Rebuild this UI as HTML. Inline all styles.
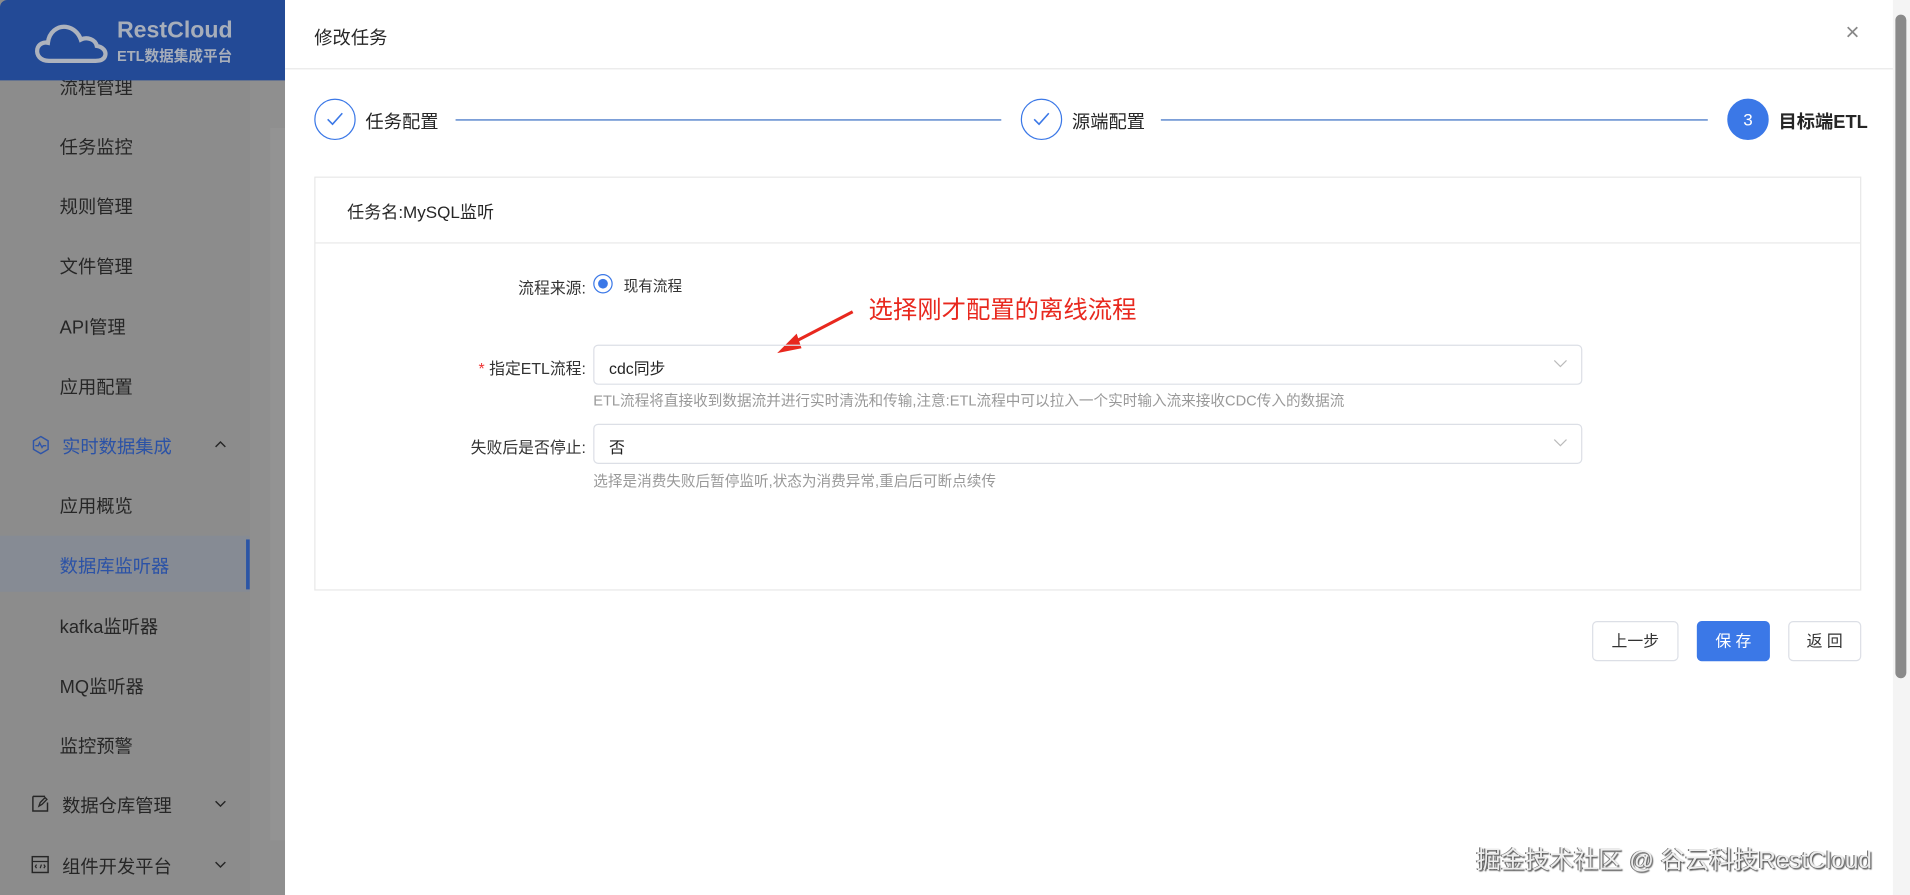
<!DOCTYPE html>
<html><head><meta charset="utf-8"><style>
*{margin:0;padding:0;box-sizing:border-box}
html,body{width:1910px;height:895px;overflow:hidden;background:#fff}
#w{position:absolute;left:0;top:0;width:1568px;height:735px;transform:scale(1.21811,1.2177);transform-origin:0 0;font-family:"Liberation Sans","Noto Sans CJK SC",sans-serif;color:#333}
.abs{position:absolute}
#side{left:0;top:0;width:234px;height:735px;background:#8c8c8c}
#hdr{left:0;top:0;width:234px;height:66px;background:#234a96;border-top-left-radius:6px}
.mi{position:absolute;left:49px;font-size:15px;color:#262626}
.ic{position:absolute;left:25px}
.ar{position:absolute;left:176px}
#dr{left:234px;top:0;width:1320px;height:735px;background:#fff}
.step{position:absolute;top:81px;width:34px;height:34px;border:1px solid #3b78e7;border-radius:50%}
.sl{position:absolute;top:98px;height:1px;background:#3b6fc4}
.st{position:absolute;top:89px;font-size:15px;color:#262626}
.lbl{position:absolute;font-size:13px;color:#333;text-align:right;width:200px}
.sel{position:absolute;left:487px;width:812px;height:33px;border:1px solid #dcdfe6;border-radius:4px;font-size:13px;padding:8px 12px;color:#222}
.hint{position:absolute;left:487px;font-size:12px;color:#999}
.btn{position:absolute;top:510px;height:33px;border:1px solid #dcdfe6;border-radius:4px;font-size:13px;text-align:center;line-height:31px;background:#fff;color:#333}
</style></head><body><div id="w">
<div id="side" class="abs">
 <div class="abs" style="left:205px;top:66px;width:29px;height:669px;background:#8f8f8f"></div>
 <div class="abs" style="left:222px;top:105px;width:12px;height:585px;background:#939393"></div>
 <div class="abs" style="left:0;top:440px;width:205px;height:46px;background:#868b94"></div>
 <div class="abs" style="left:202px;top:443px;width:3px;height:41px;background:#2b55a6"></div>
 <div class="mi" style="top:61px">流程管理</div>
 <div class="mi" style="top:110px">任务监控</div>
 <div class="mi" style="top:159px">规则管理</div>
 <div class="mi" style="top:208px">文件管理</div>
 <div class="mi" style="top:258px">API管理</div>
 <div class="mi" style="top:307px">应用配置</div>
 <svg class="ic" style="top:357px" width="17" height="17" viewBox="0 0 17 17"><path d="M8.5 1.5l6 3.5v7l-6 3.5-6-3.5V5z" fill="none" stroke="#2f55a8" stroke-width="1.2"/><path d="M4 9h2.5l1-2.5 2 4 1-1.5H13" fill="none" stroke="#2f55a8" stroke-width="1.1"/></svg>
 <div class="mi" style="top:356px;color:#2b52a6;left:51px">实时数据集成</div>
 <svg class="ar" style="top:362px" width="10" height="6"><path d="M1 5l4-4 4 4" fill="none" stroke="#262626" stroke-width="1.2"/></svg>
 <div class="mi" style="top:405px;left:49px">应用概览</div>
 <div class="mi" style="top:454px;color:#2b52a6">数据库监听器</div>
 <div class="mi" style="top:504px">kafka监听器</div>
 <div class="mi" style="top:553px">MQ监听器</div>
 <div class="mi" style="top:602px">监控预警</div>
 <svg class="ic" style="top:652px" width="16" height="16" viewBox="0 0 16 16"><path d="M2 2h10M2 2v12h12V7" fill="none" stroke="#262626" stroke-width="1.2"/><path d="M7 10l1-3 4-4 1.5 1.5-4 4z" fill="none" stroke="#262626" stroke-width="1.1"/></svg>
 <div class="mi" style="top:651px;left:51px">数据仓库管理</div>
 <svg class="ar" style="top:657px" width="10" height="6"><path d="M1 1l4 4 4-4" fill="none" stroke="#262626" stroke-width="1.2"/></svg>
 <svg class="ic" style="top:702px" width="16" height="16" viewBox="0 0 16 16"><rect x="1.5" y="1.5" width="13" height="13" fill="none" stroke="#262626" stroke-width="1.2"/><path d="M1.5 5.5h13M5 11L4 9.5 5 8M8 11l1-3M11 8l1 1.5-1 1.5" fill="none" stroke="#262626" stroke-width="1"/></svg>
 <div class="mi" style="top:701px;left:51px">组件开发平台</div>
 <svg class="ar" style="top:707px" width="10" height="6"><path d="M1 1l4 4 4-4" fill="none" stroke="#262626" stroke-width="1.2"/></svg>
</div>
<div id="hdr" class="abs">
 <svg class="abs" style="left:28px;top:17px" width="68" height="38" viewBox="0 0 78 40"><path d="M14 36C6 36 2 31 3 25 4 20 9 18 13 19 14 9 22 3 30 4 37 5 42 10 44 16 50 13 58 16 59 22 65 23 68 27 67 31 66 35 62 36 58 36Z" fill="none" stroke="#aeb3bd" stroke-width="4"/></svg>
 <div class="abs" style="left:96px;top:15px;font-size:19px;font-weight:bold;color:#a7aeba">RestCloud</div>
 <div class="abs" style="left:96px;top:37px;font-size:12px;font-weight:bold;color:#a7aeba">ETL数据集成平台</div>
</div>
<div id="dr" class="abs"></div>
<div class="abs" style="left:258px;top:20px;font-size:15px;color:#262626">修改任务</div>
<div class="abs" style="left:1515px;top:16px;font-size:20px;color:#888">×</div>
<div class="abs" style="left:234px;top:56px;width:1320px;height:1px;background:#e8e8e8"></div>
<div class="step" style="left:258px"><svg width="32" height="32" viewBox="0 0 32 32"><path d="M10 16l4 4 8-9" fill="none" stroke="#3b78e7" stroke-width="1.3"/></svg></div>
<div class="st" style="left:300px">任务配置</div>
<div class="sl" style="left:374px;width:448px"></div>
<div class="step" style="left:838px"><svg width="32" height="32" viewBox="0 0 32 32"><path d="M10 16l4 4 8-9" fill="none" stroke="#3b78e7" stroke-width="1.3"/></svg></div>
<div class="st" style="left:880px">源端配置</div>
<div class="sl" style="left:953px;width:449px"></div>
<div class="step" style="left:1418px;background:#3b78e7;color:#fff;text-align:center;line-height:32px;font-size:14px">3</div>
<div class="st" style="left:1460px;font-weight:bold">目标端ETL</div>
<div class="abs" style="left:258px;top:145px;width:1270px;height:340px;border:1px solid #e8e8e8"></div>
<div class="abs" style="left:259px;top:199px;width:1268px;height:1px;background:#e8e8e8"></div>
<div class="abs" style="left:285px;top:164px;font-size:14px;color:#262626">任务名:MySQL监听</div>
<div class="lbl" style="left:281px;top:226px">流程来源:</div>
<div class="abs" style="left:487px;top:225px;width:16px;height:16px;border:1px solid #3b78e7;border-radius:50%"><div style="margin:3px;width:8px;height:8px;border-radius:50%;background:#3b78e7"></div></div>
<div class="abs" style="left:512px;top:226px;font-size:12px;color:#333">现有流程</div>
<div class="abs" style="left:713px;top:238px;font-size:20px;color:#e8281e">选择刚才配置的离线流程</div>
<svg class="abs" style="left:630px;top:250px" width="80" height="45" viewBox="0 0 80 45"><path d="M70 6L18 33" stroke="#e8281e" stroke-width="2.5"/><path d="M8 40L24 24 28 36Z" fill="#e8281e"/></svg>
<div class="lbl" style="left:281px;top:292px"><span style="color:#e33">*</span> 指定ETL流程:</div>
<div class="sel" style="top:283px">cdc同步</div>
<svg class="abs" style="left:1275px;top:295px" width="12" height="8"><path d="M1 1l5 5 5-5" fill="none" stroke="#bbb"/></svg>
<div class="hint" style="top:320px">ETL流程将直接收到数据流并进行实时清洗和传输,注意:ETL流程中可以拉入一个实时输入流来接收CDC传入的数据流</div>
<div class="lbl" style="left:281px;top:357px">失败后是否停止:</div>
<div class="sel" style="top:348px">否</div>
<svg class="abs" style="left:1275px;top:360px" width="12" height="8"><path d="M1 1l5 5 5-5" fill="none" stroke="#bbb"/></svg>
<div class="hint" style="top:386px">选择是消费失败后暂停监听,状态为消费异常,重启后可断点续传</div>
<div class="btn" style="left:1307px;width:71px">上一步</div>
<div class="btn" style="left:1393px;width:60px;background:#3b78e7;border-color:#3b78e7;color:#fff">保 存</div>
<div class="btn" style="left:1468px;width:60px">返 回</div>
<div class="abs" style="left:1212px;top:690px;font-size:20px;color:#eee;text-shadow:1px 1px 1px #555,-1px 0 0 #777">掘金技术社区 @ 谷云科技RestCloud</div>
<div class="abs" style="left:1554px;top:0;width:14px;height:735px;background:#f4f4f4"></div>
<div class="abs" style="left:1556px;top:12px;width:9px;height:545px;border-radius:5px;background:#8a8a8a"></div>
</div></body></html>
